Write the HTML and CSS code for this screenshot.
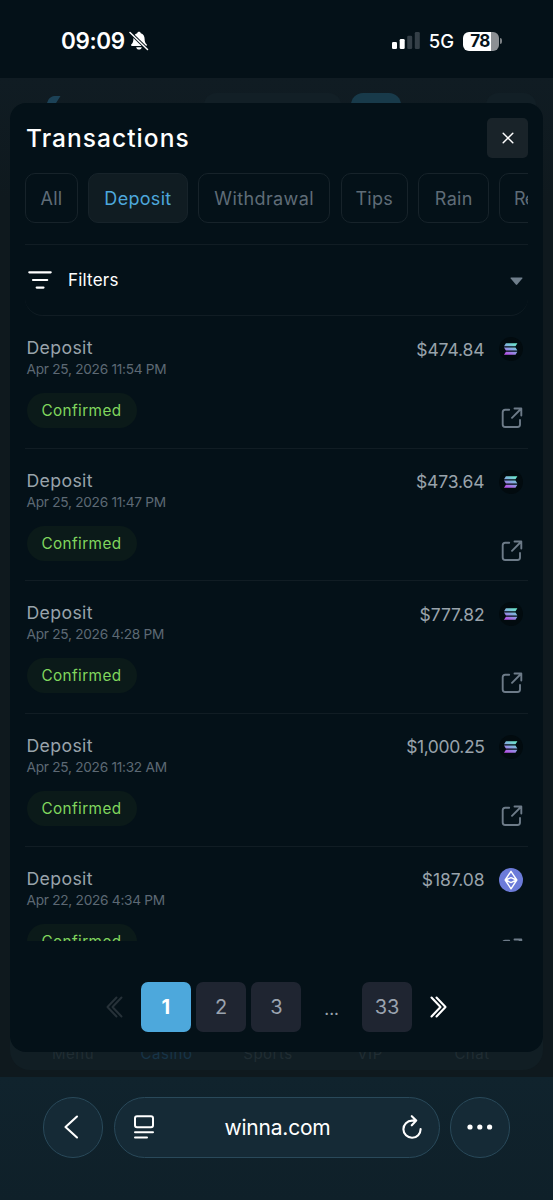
FILE: index.html
```html
<!DOCTYPE html>
<html lang="en">
<head>
<meta charset="utf-8">
<title>Transactions</title>
<link rel="stylesheet" href="styles.css">
</head>
<body>
<svg class="defs" width="0" height="0" aria-hidden="true">
  <defs>
    <linearGradient id="sol" gradientUnits="userSpaceOnUse" x1="15" y1="6" x2="9" y2="18">
      <stop offset="0" stop-color="#6be8cb"/><stop offset=".5" stop-color="#86a3e0"/><stop offset="1" stop-color="#b652e6"/>
    </linearGradient>
    <symbol id="solana" viewBox="0 0 24 24">
      <circle cx="12" cy="12" r="12" fill="#020b0f"/>
      <path fill="url(#sol)" d="M6.900 6.300H18.400L16.500 9.300H5zM5 10.500H16.500L18.400 13.500H6.900zM6.900 14.800H18.400L16.500 17.800H5z"/>
    </symbol>
    <symbol id="ether" viewBox="0 0 24 24">
      <circle cx="12" cy="12" r="12" fill="#6c7bd9"/>
      <path fill="none" stroke="#fff" stroke-width="1.400" stroke-linejoin="round" d="M12 3.300 6.200 12 12 20.800 17.800 12zM6.600 12 12 9.600 17.400 12 12 14.600z"/>
    </symbol>
    <symbol id="external" viewBox="0 0 22 22">
      <path fill="none" stroke="#6d7b88" stroke-width="1.900" stroke-linecap="round" stroke-linejoin="round" d="M8.200 2.700H4.200Q1.700 2.700 1.700 5.200V17.500Q1.700 20 4.200 20H16.500Q19 20 19 17.500V13M13.500 1.500H20.300V8.500M19.800 2 11 10.800"/>
    </symbol>
  </defs>
</svg>

<header class="status">
  <div class="status-left">
    <span class="clock">09:09</span>
    <svg width="20" height="20" viewBox="0 0 20 20">
      <path fill="#fff" d="M10 .8c.9 0 1.600.6 1.800 1.400 2.500.7 3.800 2.900 3.800 5.600 0 3.300.8 4.400 2 5.500.6.600.400 1.600-.6 1.600H3c-1 0-1.200-1-.6-1.600 1.200-1.100 2-2.200 2-5.500 0-2.700 1.300-4.900 3.800-5.600C8.400 1.400 9.100.8 10 .8zM7.200 16.300h5.600c-.3 1.500-1.400 2.300-2.800 2.300s-2.500-.8-2.800-2.300z"/>
      <path stroke="#05121a" stroke-width="3.200" d="M1 1.500 18.500 18.500"/>
      <path stroke="#fff" stroke-width="1.500" stroke-linecap="round" d="M1 1.500 18.500 18.500"/>
    </svg>
  </div>
  <div class="status-right">
    <svg width="28" height="18" viewBox="0 0 28 18">
      <rect x="0" y="10" width="5" height="7" rx="1.300" fill="#fff"/>
      <rect x="7.700" y="7" width="5" height="10" rx="1.300" fill="#fff"/>
      <rect x="15.200" y="3.700" width="5" height="13.300" rx="1.300" fill="#343f47"/>
      <rect x="22.800" y="0" width="5" height="17" rx="1.300" fill="#343f47"/>
    </svg>
    <span class="network">5G</span>
    <span class="battery"><span class="level">78</span><i class="nub"></i></span>
  </div>
</header>

<div class="page">
  <div class="site-top">
    <svg class="site-logo" width="20" height="14" viewBox="0 0 20 14"><path fill="#1c4257" d="M18.500 0H12.500Q9 0 6.500 3.500L2 14H11Q14 6 18.500 0z"/></svg>
    <i class="ghost search"></i><i class="ghost wallet"></i><i class="ghost profile"></i>
  </div>
  <nav class="site-nav"><span>Menu</span><span class="on">Casino</span><span>Sports</span><span>VIP</span><span>Chat</span></nav>

  <main class="modal">
    <div class="modal-head">
      <h1>Transactions</h1>
      <button class="close"><svg width="12" height="12" viewBox="0 0 12 12"><path stroke="#fff" stroke-width="1.500" stroke-linecap="round" d="M1.200 1.200 10.800 10.800M10.800 1.200 1.200 10.800"/></svg></button>
    </div>
    <div class="tabs">
      <span class="tab">All</span><span class="tab active">Deposit</span><span class="tab wide">Withdrawal</span><span class="tab">Tips</span><span class="tab">Rain</span><span class="tab last">Ref</span>
    </div>
    <div class="filters">
      <svg width="24" height="18" viewBox="0 0 24 18"><path stroke="#fff" stroke-width="2.200" stroke-linecap="round" d="M1.300 1.300H22.700M5 9H19.200M8.700 16.600H15.500"/></svg>
      <span>Filters</span>
      <svg class="caret" width="13" height="9" viewBox="0 0 13 9"><path fill="#6f7e8b" d="M1.200.5H11.800Q13 .5 12.300 1.500L7.200 7.600Q6.500 8.400 5.800 7.600L.7 1.500Q0 .5 1.200.5z"/></svg>
    </div>
    <div class="list">
      <article class="row">
        <div class="info"><div class="kind">Deposit</div><div class="date">Apr 25, 2026 11:54 PM</div><div class="badge">Confirmed</div></div>
        <div class="side"><div class="amount"><span>$474.84</span><svg width="24" height="24"><use href="#solana"/></svg></div><svg class="ext" width="22" height="22"><use href="#external"/></svg></div>
      </article>
      <article class="row">
        <div class="info"><div class="kind">Deposit</div><div class="date">Apr 25, 2026 11:47 PM</div><div class="badge">Confirmed</div></div>
        <div class="side"><div class="amount"><span>$473.64</span><svg width="24" height="24"><use href="#solana"/></svg></div><svg class="ext" width="22" height="22"><use href="#external"/></svg></div>
      </article>
      <article class="row">
        <div class="info"><div class="kind">Deposit</div><div class="date">Apr 25, 2026 4:28 PM</div><div class="badge">Confirmed</div></div>
        <div class="side"><div class="amount"><span>$777.82</span><svg width="24" height="24"><use href="#solana"/></svg></div><svg class="ext" width="22" height="22"><use href="#external"/></svg></div>
      </article>
      <article class="row">
        <div class="info"><div class="kind">Deposit</div><div class="date">Apr 25, 2026 11:32 AM</div><div class="badge">Confirmed</div></div>
        <div class="side"><div class="amount long"><span>$1,000.25</span><svg width="24" height="24"><use href="#solana"/></svg></div><svg class="ext" width="22" height="22"><use href="#external"/></svg></div>
      </article>
      <article class="row">
        <div class="info"><div class="kind">Deposit</div><div class="date">Apr 22, 2026 4:34 PM</div><div class="badge">Confirmed</div></div>
        <div class="side"><div class="amount"><span>$187.08</span><svg width="24" height="24"><use href="#ether"/></svg></div><svg class="ext" width="22" height="22"><use href="#external"/></svg></div>
      </article>
    </div>
    <div class="pager">
      <svg class="prev" width="17" height="22" viewBox="0 0 17 22"><path fill="none" stroke="#263138" stroke-width="2" stroke-linecap="round" stroke-linejoin="round" d="M10.500 1.500 1.500 11 10.500 20.500M15.500 1.500 6.500 11 15.500 20.500"/></svg>
      <span class="num current">1</span><span class="num">2</span><span class="num">3</span><span class="num dots">...</span><span class="num">33</span>
      <svg class="next" width="17" height="22" viewBox="0 0 17 22"><path fill="none" stroke="#fff" stroke-width="2.100" stroke-linecap="round" stroke-linejoin="round" d="M1.500 1.500 10.500 11 1.500 20.500M6.500 1.500 15.500 11 6.500 20.500"/></svg>
    </div>
  </main>
</div>

<footer class="browser">
  <span class="glass round"><svg class="back" width="15" height="24" viewBox="0 0 15 24"><path fill="none" stroke="#fff" stroke-width="2.100" stroke-linecap="round" stroke-linejoin="round" d="M13 1.500 1.500 12 13 22.500"/></svg></span>
  <div class="glass address">
    <svg width="20" height="24" viewBox="0 0 20 24"><rect x="1" y="1.200" width="18" height="11" rx="2" fill="none" stroke="#fff" stroke-width="2"/><path stroke="#fff" stroke-width="2" stroke-linecap="round" d="M1 17.200H19M1 22.600H13"/></svg>
    <span>winna.com</span>
    <svg width="20" height="24" viewBox="0 0 20 24"><path fill="none" stroke="#fff" stroke-width="2.100" stroke-linecap="round" stroke-linejoin="round" d="M13.500 5.600H10A8.600 8.600 0 1 0 18.600 14M9.800 1.200 14.200 5.600 9.800 10.300"/></svg>
  </div>
  <span class="glass round"><svg width="26" height="6" viewBox="0 0 26 6"><circle cx="3" cy="3" r="2.600" fill="#fff"/><circle cx="12.800" cy="3" r="2.600" fill="#fff"/><circle cx="22.600" cy="3" r="2.600" fill="#fff"/></svg></span>
</footer>
</body>
</html>
```
FILE: styles.css
```css
* { box-sizing: border-box; }
body {
  margin: 0;
  width: 553px;
  height: 1200px;
  overflow: hidden;
  display: flex;
  flex-direction: column;
  background: #10222b;
  color: #fff;
  font-family: Inter, "Liberation Sans", sans-serif;
  white-space: nowrap;
}
svg { display: block; flex: none; }
.defs { position: absolute; }

.status {
  height: 78px;
  flex: none;
  padding: 4px 51px 0 61px;
  display: flex;
  align-items: center;
  justify-content: space-between;
  background: #041118;
}
.status-left, .status-right { display: flex; align-items: center; }
.status-left { gap: 4px; }
.clock { font-size: 22.5px; font-weight: 600; letter-spacing: -0.4px; line-height: 26px; }
.status-right { gap: 9px; }
.network { font-size: 18.5px; font-weight: 500; }
.battery { display: flex; align-items: center; gap: 1px; }
.level {
  width: 36px;
  height: 19px;
  border-radius: 6px;
  background: linear-gradient(90deg, #fff 78%, #8c9094 78%);
  color: #05121a;
  font-size: 17px;
  font-weight: 700;
  line-height: 19px;
  text-align: center;
  letter-spacing: -0.6px;
  padding-right: 2px;
}
.nub { width: 2px; height: 6px; border-radius: 0 3px 3px 0; background: #7b8084; }

.page {
  height: 999px;
  flex: none;
  position: relative;
  padding: 25px 10px;
  background: linear-gradient(180deg, #101c23, #0f191e 12%, #0f191e);
}
.site-top { position: absolute; left: 0; top: 15px; width: 553px; height: 40px; }
.site-logo { position: absolute; left: 42px; top: 3px; }
.ghost { position: absolute; height: 40px; border-radius: 12px; background: #121f26; top: 0; }
.search { left: 204px; width: 137px; }
.wallet { left: 351px; width: 50px; background: #183a4a; }
.profile { left: 486px; width: 50px; }
.site-nav {
  position: absolute;
  left: 10px;
  bottom: 7px;
  width: 533px;
  height: 60px;
  padding: 34px 20px 0 20px;
  border-radius: 20px;
  background: #111e24;
  display: grid;
  grid-template-columns: 86px 101px 102px 102px 102px;
  justify-content: center;
  text-align: center;
  font-size: 15px;
  letter-spacing: 0.5px;
  line-height: 20px;
  color: #202d33;
}
.site-nav .on { color: #173448; }

.modal {
  position: relative;
  height: 949px;
  padding: 15px 15px 20px;
  border-radius: 16px;
  background: #041118;
  display: flex;
  flex-direction: column;
}
.modal-head { display: flex; justify-content: space-between; align-items: center; height: 40px; flex: none; }
h1 { margin: 0 0 0 1px; font-size: 24.5px; font-weight: 500; letter-spacing: 1.05px; line-height: 40px; }
.close {
  width: 41px;
  height: 40px;
  padding: 0;
  border: 0;
  border-radius: 5px;
  background: #192329;
  display: grid;
  place-items: center;
}
.tabs {
  margin-top: 15px;
  height: 50px;
  overflow: hidden;
  display: grid;
  grid-template-columns: 53px 99.5px 132.5px 67.5px 71px 71px;
  gap: 10.2px;
  flex: none;
}
.tab {
  border: 1.5px solid #17232a;
  border-radius: 10px;
  display: grid;
  place-items: center;
  font-size: 18px;
  letter-spacing: 0.3px;
  color: #5f6c77;
}
.tab.wide { letter-spacing: 0.4px; }
.tab.active { background: #101c22; color: #4da7dc; }
.tab.last { justify-content: start; padding-left: 13.5px; letter-spacing: -0.6px; }
.filters {
  margin-top: 20.5px;
  height: 72.7px;
  flex: none;
  padding: 0 5px 0 3px;
  display: flex;
  align-items: center;
  gap: 16px;
  border-top: 1px solid #111d24;
  border-bottom: 1px solid #111d24;
  border-radius: 0 0 18px 18px;
  font-size: 17px;
  letter-spacing: 0.2px;
}
.caret { margin-left: auto; margin-top: 3px; }

.list { height: 624.5px; overflow: hidden; flex: none; }
.row {
  height: 132.6px;
  padding: 20px 5.5px 0 1.5px;
  display: flex;
  justify-content: space-between;
  border-bottom: 1.5px solid #111d24;
}
.kind { font-size: 17.7px; letter-spacing: 0.35px; line-height: 23px; color: #99a3ab; }
.date { font-size: 13.7px; line-height: 20px; letter-spacing: -0.28px; color: #5d6974; }
.badge {
  margin-top: 14px;
  width: 110px;
  height: 35px;
  border-radius: 18px;
  background: #0b1a19;
  color: #80d65e;
  font-size: 15.3px;
  letter-spacing: 0.4px;
  line-height: 35px;
  text-align: center;
}
.side { display: flex; flex-direction: column; align-items: flex-end; padding-top: 1px; }
.amount { display: flex; align-items: center; gap: 14px; font-size: 17.5px; color: #99a3ab; letter-spacing: -0.1px; height: 24px; }
.amount.long { letter-spacing: -0.4px; }
.ext { margin-top: 46px; }

.pager { margin-top: auto; padding-left: 80.5px; display: flex; align-items: center; gap: 5.3px; }
.num {
  width: 50px;
  height: 50.5px;
  border-radius: 7px;
  background: #1f2531;
  color: #9aa3af;
  font-size: 20px;
  display: grid;
  place-items: center;
}
.current { background: #4da8dc; color: #fff; font-weight: 700; }
.dots { background: none; font-size: 17px; padding-top: 4px; }
.prev { margin-right: 13px; }
.next { margin-left: 13px; }

.browser { flex: 1; padding: 20px 43px 0; display: flex; gap: 10.5px; background: linear-gradient(180deg, #10232d, #0f2029); }
.glass { height: 60.5px; border: 1.2px solid #29495a; border-radius: 31px; background: #152a36; display: flex; align-items: center; }
.round { width: 60px; justify-content: center; flex: none; }
.back { margin-right: 4px; }
.address { flex: 1; padding: 0 17px 0 19px; justify-content: space-between; font-size: 21px; letter-spacing: -0.2px; }
```
